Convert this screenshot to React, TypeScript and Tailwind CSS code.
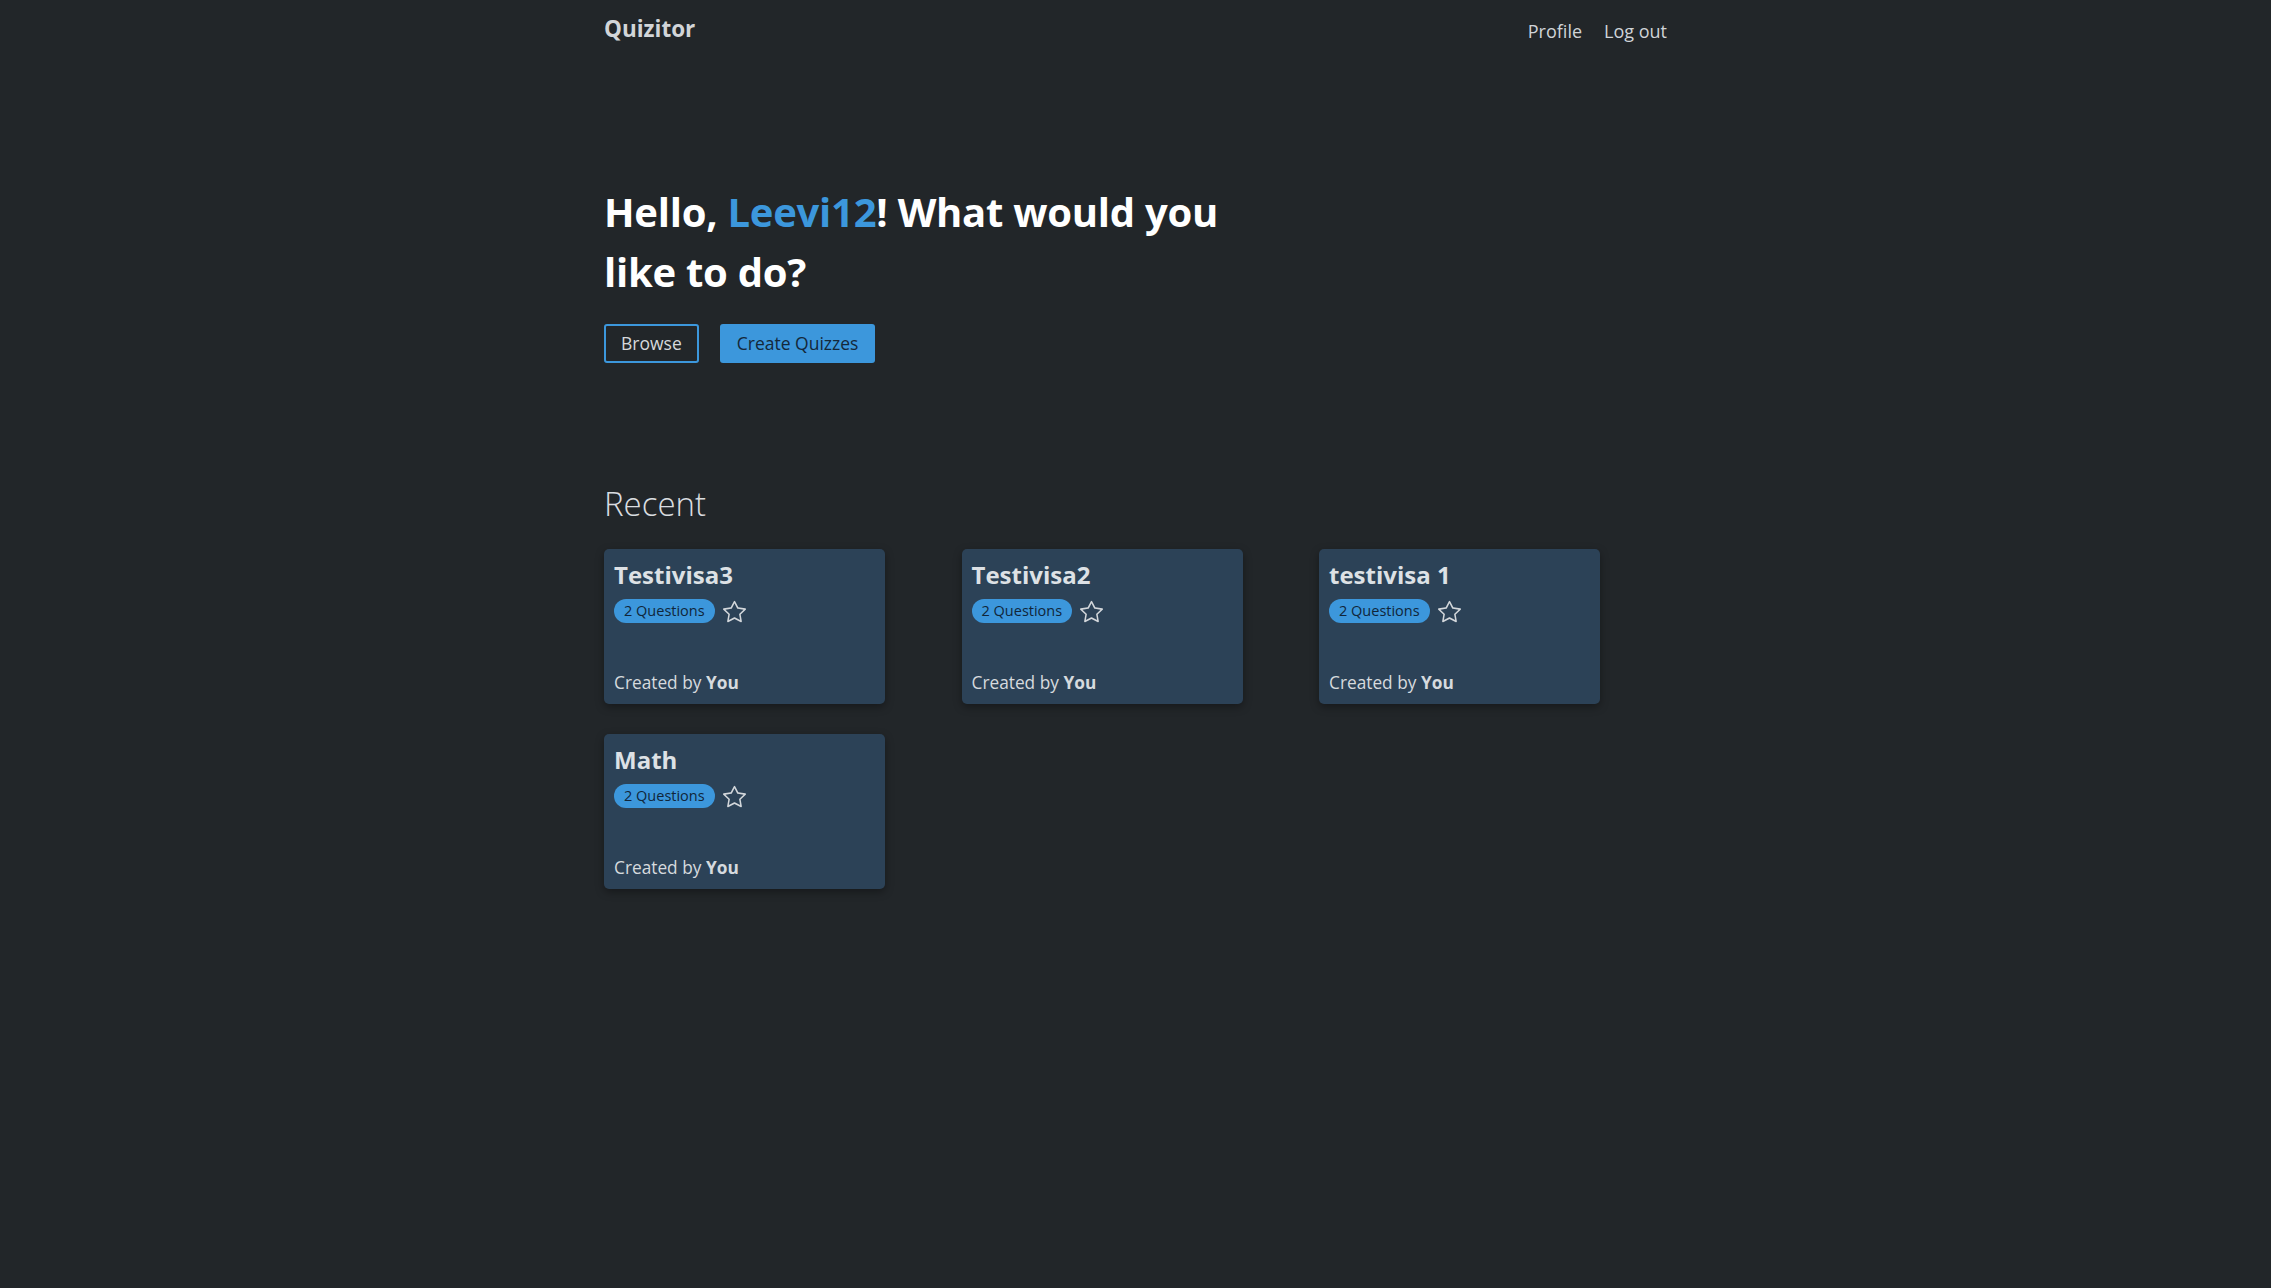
import { BsStar } from 'react-icons/bs';

type Quiz = {
  title: string;
  questions: number;
};

const quizzes: Quiz[] = [
  { title: 'Testivisa3', questions: 2 },
  { title: 'Testivisa2', questions: 2 },
  { title: 'testivisa 1', questions: 2 },
  { title: 'Math', questions: 2 },
];

const QuizCard = ({ quiz }: { quiz: Quiz }) => {
  return (
    <div className="h-[155px] w-[281px] flex flex-col rounded-[5px] bg-[#2c4257] px-[10px] pt-[12px] pb-[9px] shadow-[0_3px_8px_rgba(0,0,0,0.35)]">
      <h3 className="text-[24px] leading-[28.8px] font-bold text-[#dde1e5]">{quiz.title}</h3>
      <div className="mt-[9px] flex items-center gap-[8px]">
        <span className="h-[24px] flex items-center rounded-full bg-[#3c97dc] px-[10px] text-[14.5px] text-[#10263a]">
          {quiz.questions} Questions
        </span>
        <BsStar size={23} className="text-[#d3d7db]" />
      </div>
      <p className="mt-auto text-[17.3px] leading-[25.5px] text-[#d6dade]">
        Created by <span className="font-bold">You</span>
      </p>
    </div>
  );
};

export default function App() {
  return (
    <div className="min-h-screen w-full bg-[#222629] font-['Open_Sans',sans-serif]">
      <div className="mx-auto w-[1063px]">
        {/* navbar */}
        <nav className="h-[56px] flex justify-between items-start">
          <a className="mt-[14px] text-[22.5px] leading-[30px] font-bold text-[#d2d5d8]">Quizitor</a>
          <div className="mt-[18px] flex gap-[22px] text-[18px] leading-[27px] text-[#d0d4d8]">
            <a>Profile</a>
            <a>Log out</a>
          </div>
        </nav>

        <section className="mt-[126px]">
          <h1 className="max-w-[650px] text-[40px] leading-[60px] font-bold tracking-[-0.25px] text-white">
            Hello, <span className="text-[#3c97dc]">Leevi12</span>! What would you like to do?
          </h1>
          <div className="mt-[22px] flex gap-[21px]">
            <button className="h-[39px] rounded-[3px] border-2 border-[#3c97dc] px-[15px] text-[17.5px] text-[#d6d9dc]">
              Browse
            </button>
            <button className="h-[39px] rounded-[3px] bg-[#3c97dc] px-[17px] text-[17.5px] text-[#14283a]">
              Create Quizzes
            </button>
          </div>
        </section>

        <section className="mt-[122px]">
          <h2 className="text-[33px] leading-[38.4px] font-light text-[#dadde0]">Recent</h2>
          <div className="mt-[26px] grid grid-cols-[repeat(3,281px)] gap-x-[76.5px] gap-y-[30px]">
            {quizzes.map((q) => (
              <QuizCard key={q.title} quiz={q} />
            ))}
          </div>
        </section>
      </div>
    </div>
  );
}
